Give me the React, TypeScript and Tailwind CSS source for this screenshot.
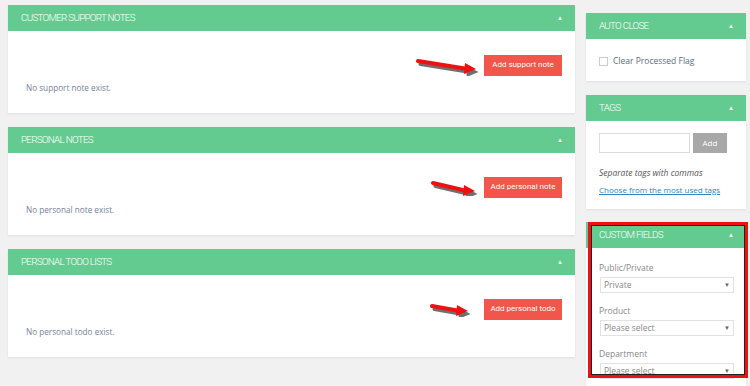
import React from "react";

const Header = ({ title }: { title: string }) => (
  <div className="h-[26px] bg-[#63cb8f] flex items-center justify-between pl-[13px] pr-[12px]">
    <span className="text-[9.8px] text-white font-light tracking-[-0.7px] uppercase" style={{ fontFamily: "Roboto, sans-serif" }}>
      {title}
    </span>
    <span className="text-white text-[6px] leading-none">▲</span>
  </div>
);

const Arrow = ({ w, h, y0, y1, mr }: { w: number; h: number; y0: number; y1: number; mr: string }) => (
  <svg width={w} height={h} viewBox={`0 0 ${w} ${h}`} className={mr}>
    <g transform="translate(1.5,2)" opacity="0.6">
      <line x1={3} y1={y0} x2={w - 11} y2={y1} stroke="#111" strokeWidth={4} strokeLinecap="round" />
      <polygon points={`${w - 14},${y1 - 6} ${w - 3},${y1} ${w - 15},${y1 + 5}`} fill="#111" />
    </g>
    <line x1={2} y1={y0 - 1} x2={w - 12} y2={y1 - 1} stroke="#ee1111" strokeWidth={4} strokeLinecap="round" />
    <polygon points={`${w - 15},${y1 - 7} ${w - 4},${y1 - 1} ${w - 16},${y1 + 4}`} fill="#ee1111" />
  </svg>
);

const NotePanel = ({
  title,
  button,
  empty,
  arrow,
}: {
  title: string;
  button: string;
  empty: string;
  arrow: React.ReactNode;
}) => (
  <div className="bg-white shadow-[0_1px_2px_rgba(0,0,0,0.08)]">
    <Header title={title} />
    <div className="pt-[23px] pb-[18px]">
      <div className="flex items-center justify-end pr-[13px] h-[22px]">
        {arrow}
        <button className="h-[21px] w-[78px] bg-[#f2554a] text-white text-[8px]" style={{ fontFamily: "Roboto, sans-serif" }}>
          {button}
        </button>
      </div>
      <p className="mt-[5px] pl-[18px] text-[8.2px] leading-[14px] text-[#76829a]" style={{ fontFamily: "'Open Sans', sans-serif" }}>
        {empty}
      </p>
    </div>
  </div>
);

const Select = ({ value }: { value: string }) => (
  <div className="mt-[3px] h-[16px] w-[134px] ml-[1px] border border-[#e2e2e2] flex items-center justify-between px-[3px]">
    <span className="text-[8.5px] text-[#888]">{value}</span>
    <span className="text-[6px] text-[#666]">▼</span>
  </div>
);

export default function App() {
  const sans = { fontFamily: "'Open Sans', sans-serif" };
  return (
    <div className="w-[750px] h-[386px] overflow-hidden bg-[#f1f1f1] flex pl-[8px] gap-[11px]">
      <div className="w-[567px] pt-[5px] flex flex-col gap-[14px]">
        <NotePanel
          title="Customer Support Notes"
          button="Add support note"
          empty="No support note exist."
          arrow={<Arrow w={64} h={18} y0={4} y1={12} mr="mr-[4px] mt-[4px]" />}
        />
        <NotePanel
          title="Personal Notes"
          button="Add personal note"
          empty="No personal note exist."
          arrow={<Arrow w={48} h={16} y0={4} y1={12} mr="mr-[5px] mt-[2px]" />}
        />
        <NotePanel
          title="Personal Todo Lists"
          button="Add personal todo"
          empty="No personal todo exist."
          arrow={<Arrow w={42} h={14} y0={4} y1={9} mr="mr-[12px] mt-[2px]" />}
        />
      </div>

      <div className="w-[160px] flex flex-col" style={sans}>
        <div className="h-[3px] bg-white shadow-[0_1px_2px_rgba(0,0,0,0.08)]" />

        <div className="mt-[13px] bg-white shadow-[0_1px_2px_rgba(0,0,0,0.08)]">
          <Header title="Auto Close" />
          <div className="h-[42px] flex items-center pl-[13px] pt-[2px]">
            <span className="w-[9px] h-[9px] border border-[#ccc] bg-white" />
            <span className="ml-[5px] text-[8.5px] text-[#5f6b80]">Clear Processed Flag</span>
          </div>
        </div>

        <div className="mt-[14px] bg-white shadow-[0_1px_2px_rgba(0,0,0,0.08)]">
          <Header title="Tags" />
          <div className="pt-[12px] pb-[13px] pl-[13px]">
            <div className="flex items-center">
              <div className="w-[91px] h-[20px] border border-[#ddd]" />
              <div className="ml-[3px] w-[34px] h-[20px] bg-[#a8a8a8] flex items-center justify-center text-white text-[8px]">Add</div>
            </div>
            <p className="mt-[14px] text-[8.5px] italic text-[#555] leading-[12px]">Separate tags with commas</p>
            <p className="mt-[5px] text-[8px] text-[#2e86c1] underline leading-[12px]">Choose from the most used tags</p>
          </div>
        </div>

        <div className="relative mt-[13px] bg-white shadow-[0_1px_2px_rgba(0,0,0,0.08)]">
          <Header title="Custom Fields" />
          <div className="pt-[14px] pl-[13px] pb-[20px]">
            <p className="text-[8.5px] text-[#888] leading-[12px]">Public/Private</p>
            <Select value="Private" />
            <p className="mt-[12px] text-[8.5px] text-[#888] leading-[12px]">Product</p>
            <Select value="Please select" />
            <p className="mt-[12px] text-[8.5px] text-[#888] leading-[12px]">Department</p>
            <Select value="Please select" />
          </div>
          <div className="absolute left-[2px] top-0 w-[160px] h-[156px] border-[3px] border-[#ee1111] shadow-[inset_0_0_0_1px_#222]" />
        </div>
      </div>
    </div>
  );
}
